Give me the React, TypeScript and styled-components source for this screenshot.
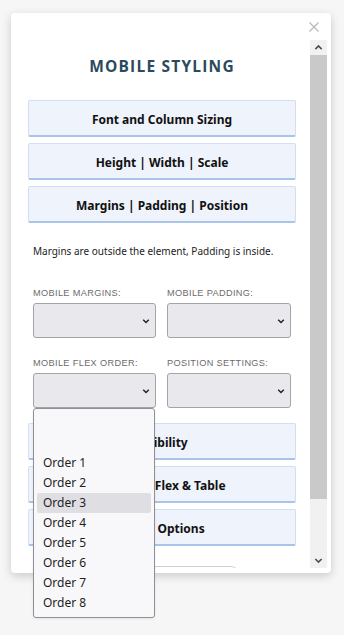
import styled, { createGlobalStyle } from "styled-components";

const GlobalStyle = createGlobalStyle`
  html, body {
    margin: 0;
    padding: 0;
    background: #f6f6f6;
  }
  body {
    font-family: "Open Sans", "Noto Sans", sans-serif;
  }
`;

const Page = styled.div`
  position: relative;
  width: 344px;
  height: 635px;
  padding: 13px 0 0 11px;
  box-sizing: border-box;
`;

const Modal = styled.div`
  width: 320px;
  height: 560px;
  background: #fff;
  border-radius: 4px;
  box-shadow: 0 3px 10px rgba(0, 0, 0, 0.18);
  display: flex;
  flex-direction: column;
  overflow: hidden;
`;

const ModalHeader = styled.div`
  height: 27px;
  display: flex;
  justify-content: flex-end;
  align-items: center;
  padding-right: 11px;
  flex-shrink: 0;
`;

const CloseButton = styled.button`
  border: 0;
  background: none;
  padding: 0;
  width: 12px;
  height: 12px;
  display: flex;
  cursor: pointer;
`;

const ModalBody = styled.div`
  flex: 1;
  display: flex;
  padding: 0 4px 5px 0;
  min-height: 0;
`;

const Content = styled.div`
  flex: 1;
  padding: 16px 14px 0 17px;
  overflow: hidden;
`;

const Title = styled.h2`
  margin: 0 0 24px;
  text-align: center;
  font-family: "Open Sans", sans-serif;
  font-weight: 700;
  font-size: 15.5px;
  line-height: 20px;
  letter-spacing: 1.2px;
  color: #2b4a5c;
`;

const SectionList = styled.div`
  display: flex;
  flex-direction: column;
  gap: 6px;
`;

const SectionButton = styled.button`
  height: 37px;
  width: 100%;
  padding: 2px 0 0;
  background: #eff3fb;
  border: 1px solid #d3def2;
  border-bottom: 2px solid #a9c4e9;
  border-radius: 2px;
  font-family: "Noto Sans", "Open Sans", sans-serif;
  font-weight: 700;
  font-size: 12px;
  color: #111;
  cursor: pointer;
`;

const Note = styled.p`
  margin: 20px 0 28px 5px;
  font-family: "Noto Sans", sans-serif;
  font-size: 10px;
  line-height: 16px;
  color: #1c1c1c;
`;

const FieldGrid = styled.div`
  display: grid;
  grid-template-columns: 123px 124px;
  column-gap: 11px;
  row-gap: 19px;
  padding: 0 5px;
  margin-bottom: 15px;
`;

const Field = styled.div`
  display: flex;
  flex-direction: column;
  gap: 4px;
`;

const Label = styled.label`
  font-family: "Liberation Sans", Arial, sans-serif;
  font-size: 9.2px;
  line-height: 12px;
  letter-spacing: 0.35px;
  color: #6b6b6b;
  white-space: nowrap;
`;

const SelectBox = styled.div`
  height: 35px;
  box-sizing: border-box;
  background: #e9e9ed;
  border: 1px solid #a3a3a8;
  border-radius: 3px;
  display: flex;
  align-items: center;
  justify-content: flex-end;
  padding-right: 5px;
`;

const PartialBox = styled.div`
  width: 152px;
  height: 30px;
  margin: 20px auto 0;
  border: 1px solid #cfcfcf;
  border-radius: 8px;
`;

const Scrollbar = styled.div`
  width: 17px;
  display: flex;
  flex-direction: column;
  background: #f1f1f1;
`;

const ScrollArrow = styled.div`
  height: 15px;
  display: flex;
  align-items: center;
  justify-content: center;
  flex-shrink: 0;
`;

const ScrollThumb = styled.div`
  height: 444px;
  background: #c9c9c9;
`;

const ScrollTrack = styled.div`
  flex: 1;
`;

const OptionList = styled.ul`
  position: absolute;
  left: 33px;
  top: 408px;
  width: 122px;
  box-sizing: border-box;
  margin: 0;
  padding: 4px 3px;
  list-style: none;
  background: #f8f8fa;
  border: 1px solid #8f8f94;
  border-radius: 3px;
  box-shadow: 0 1px 3px rgba(0, 0, 0, 0.08);
`;

const OptionItem = styled.li<{ $active?: boolean }>`
  height: 20px;
  line-height: 20px;
  padding-left: 6px;
  border-radius: 2px;
  font-family: "Noto Sans", "DejaVu Sans", sans-serif;
  font-size: 12px;
  color: #1e1e1e;
  background: ${(p) => (p.$active ? "#dedee3" : "transparent")};
`;

const Chevron = ({ up = false, size = 8, color = "#222" }: { up?: boolean; size?: number; color?: string }) => (
  <svg width={size} height={size} viewBox="0 0 10 10">
    <path
      d={up ? "M1.5 6.8 L5 3.3 L8.5 6.8" : "M1.5 3.3 L5 6.8 L8.5 3.3"}
      fill="none"
      stroke={color}
      strokeWidth="1.8"
    />
  </svg>
);

const topSections = ["Font and Column Sizing", "Height | Width | Scale", "Margins | Padding | Position"];
const bottomSections = ["Visibility", "Display | Flex & Table", "Other Options"];
const fields = ["Mobile Margins:", "Mobile Padding:", "Mobile Flex Order:", "Position Settings:"];
const options = ["", "", "Order 1", "Order 2", "Order 3", "Order 4", "Order 5", "Order 6", "Order 7", "Order 8"];

export default function App() {
  return (
    <Page>
      <GlobalStyle />
      <Modal>
        <ModalHeader>
          <CloseButton aria-label="Close">
            <svg width="12" height="12" viewBox="0 0 12 12">
              <path d="M1.5 1.5 L10.5 10.5 M10.5 1.5 L1.5 10.5" stroke="#b9b9b9" strokeWidth="1.2" />
            </svg>
          </CloseButton>
        </ModalHeader>
        <ModalBody>
          <Content>
            <Title>MOBILE STYLING</Title>
            <SectionList>
              {topSections.map((s) => (
                <SectionButton key={s}>{s}</SectionButton>
              ))}
            </SectionList>
            <Note>Margins are outside the element, Padding is inside.</Note>
            <FieldGrid>
              {fields.map((f) => (
                <Field key={f}>
                  <Label>{f.toUpperCase()}</Label>
                  <SelectBox>
                    <Chevron size={8} />
                  </SelectBox>
                </Field>
              ))}
            </FieldGrid>
            <SectionList>
              {bottomSections.map((s) => (
                <SectionButton key={s}>{s}</SectionButton>
              ))}
            </SectionList>
            <PartialBox />
          </Content>
          <Scrollbar>
            <ScrollArrow>
              <Chevron up size={9} color="#4f4f4f" />
            </ScrollArrow>
            <ScrollThumb />
            <ScrollTrack />
            <ScrollArrow>
              <Chevron size={9} color="#4f4f4f" />
            </ScrollArrow>
          </Scrollbar>
        </ModalBody>
      </Modal>
      <OptionList>
        {options.map((o, i) => (
          <OptionItem key={i} $active={o === "Order 3"}>
            {o}
          </OptionItem>
        ))}
      </OptionList>
    </Page>
  );
}
